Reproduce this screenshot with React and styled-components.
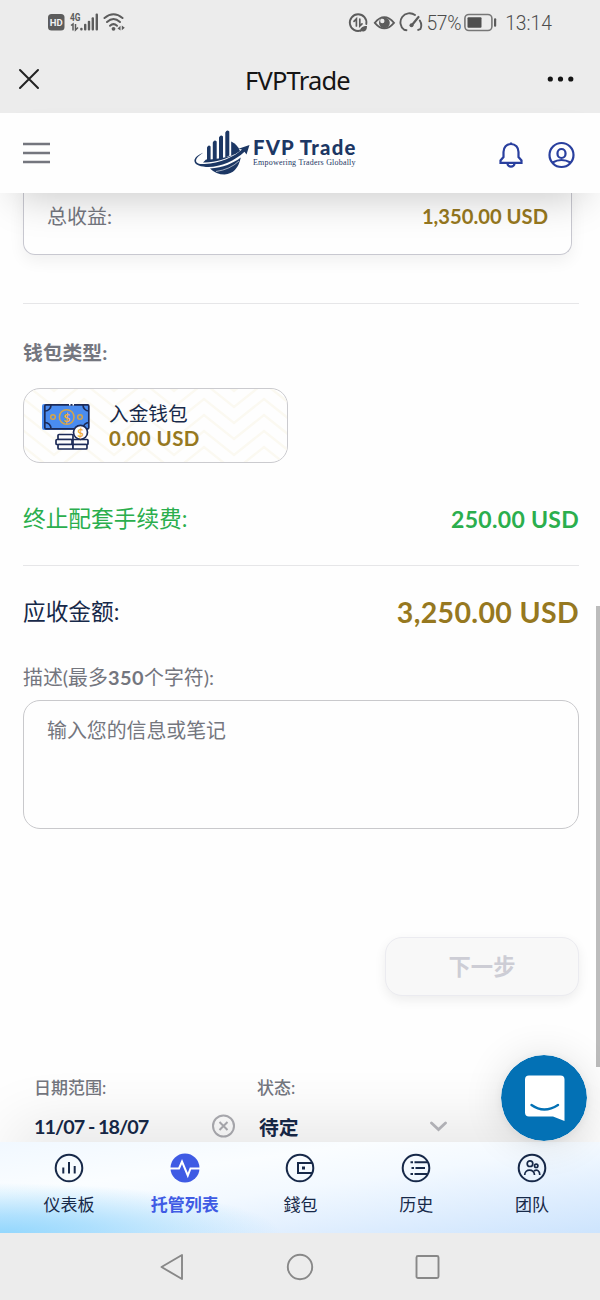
import styled, { createGlobalStyle } from "styled-components";

const GlobalStyle = createGlobalStyle`
  * {
    box-sizing: border-box;
  }
  body {
    margin: 0;
    background-color: #fefefe;
    font-family: Lato, "Noto Sans CJK SC", sans-serif;
  }
`;

const Container = styled.div`
  position: relative;
  width: 600px;
  height: 1300px;
  display: flex;
  flex-direction: column;
  overflow: hidden;
`;
const StatusBar = styled.div`
  height: 46px;
  padding: 0 48px 0 47px;
  display: flex;
  align-items: center;
  justify-content: space-between;
  background-color: #ececec;
`;
const StatusGroup = styled.div`
  display: flex;
  align-items: center;
`;
const StatusText = styled.span`
  font-family: Roboto, sans-serif;
  font-size: 19.3px;
  font-weight: 300;
  line-height: 44px;
  padding-top: 2px;
  color: #4c4c4c;
  letter-spacing: ${(props) => props.$spacing || "0"};
  margin: ${(props) => props.$margin || "0"};
`;
const TitleBar = styled.div`
  height: 67px;
  padding: 0 25px 1px 18px;
  display: grid;
  grid-template-columns: 60px 1fr 60px;
  align-items: center;
  background-color: #ececec;
`;
const Title = styled.h1`
  margin: 1px 0 0 2px;
  font-family: "Noto Sans", sans-serif;
  font-size: 25.5px;
  font-weight: 400;
  letter-spacing: -0.8px;
  color: #151515;
  text-align: center;
`;
const More = styled.svg`
  justify-self: end;
`;
const Header = styled.header`
  position: relative;
  z-index: 2;
  height: 80px;
  flex: none;
  padding: 0 24px 0 22px;
  display: grid;
  grid-template-columns: 172px 1fr auto;
  align-items: center;
  background-color: #fefefe;
  box-shadow: 0 20px 40px -16px rgba(0, 0, 0, 0.22);
`;
const Logo = styled.div`
  display: flex;
  align-items: center;
`;
const LogoText = styled.div`
  display: flex;
  flex-direction: column;
  margin: 0 0 2px 3px;
  color: #1c3764;
`;
const LogoName = styled.span`
  font-size: 20.3px;
  font-weight: 900;
  line-height: 21px;
  letter-spacing: 1.2px;
  white-space: nowrap;
`;
const LogoTagline = styled.span`
  font-family: "Liberation Serif", serif;
  font-size: 8px;
  line-height: 9px;
  letter-spacing: 0.2px;
  white-space: nowrap;
`;
const HeaderIcons = styled.div`
  display: flex;
  align-items: center;
  gap: 24px;
  margin-top: 3px;
`;
const Content = styled.main`
  height: 949px;
  flex: none;
  padding: 0 21px 0 23px;
  overflow: hidden;
  background-color: #fefefe;
`;
const ProfitCard = styled.div`
  width: 549px;
  height: 62px;
  padding: 0 23px;
  display: flex;
  align-items: flex-start;
  justify-content: space-between;
  border: 1px solid #c8c8d0;
  border-top: 0;
  border-radius: 0 0 12px 12px;
  box-shadow: 0 6px 16px rgba(0, 0, 0, 0.06);
`;
const Label = styled.span`
  font-size: ${(props) => props.$size || 20}px;
  font-weight: ${(props) => props.$weight || 400};
  line-height: ${(props) => props.$line || 46}px;
  color: ${(props) => props.$color || "#74767e"};
`;
const Digits = styled.span`
  font-weight: 700;
  letter-spacing: 0.5px;
`;
const Amount = styled.span`
  font-size: ${(props) => props.$size || 20}px;
  font-weight: 700;
  line-height: ${(props) => props.$line || 46}px;
  letter-spacing: ${(props) => props.$spacing || "0"};
  color: ${(props) => props.$color || "#967820"};
`;
const Divider = styled.hr`
  height: 1px;
  margin: ${(props) => props.$margin};
  border: 0;
  background-color: #e6e6e8;
`;
const Row = styled.div`
  height: ${(props) => props.$height}px;
  padding: ${(props) => props.$padding || "0"};
  display: flex;
  align-items: center;
  justify-content: space-between;
`;
const WalletCard = styled.div`
  position: relative;
  width: 265px;
  height: 75px;
  margin-top: 18px;
  padding-left: 18px;
  display: flex;
  align-items: center;
  gap: 18px;
  overflow: hidden;
  border: 1px solid #cbcbcf;
  border-radius: 17px;
`;
const WalletPattern = styled.svg`
  position: absolute;
  inset: 0;
`;
const WalletIcon = styled.svg`
  position: relative;
`;
const WalletInfo = styled.div`
  position: relative;
  display: flex;
  flex-direction: column;
`;
const TextArea = styled.textarea`
  display: block;
  width: 556px;
  height: 129px;
  padding: 15px 23px;
  border: 1px solid #c9c9cc;
  border-radius: 17px;
  background-color: #fefefe;
  font-family: Lato, "Noto Sans CJK SC", sans-serif;
  font-size: 19.9px;
  line-height: 28px;
  resize: none;

  &::placeholder {
    color: #74767e;
  }
`;
const Actions = styled.div`
  display: flex;
  justify-content: flex-end;
  margin-top: 108px;
`;
const NextButton = styled.button`
  width: 194px;
  height: 59px;
  padding: 0 0 3px;
  border: 1px solid #ebebf0;
  border-radius: 17px;
  background-color: #f8f8f8;
  box-shadow: 0 4px 12px rgba(0, 0, 0, 0.07);
  font-family: "Noto Sans CJK SC", sans-serif;
  font-size: 22.3px;
  font-weight: 700;
  color: #cdcdd5;
`;
const Filters = styled.div`
  display: grid;
  grid-template-columns: 223px 190px;
  margin: 77px 0 0 11px;
`;
const Filter = styled.div`
  display: flex;
  flex-direction: column;
`;
const FilterValue = styled.div`
  height: 46px;
  padding: ${(props) => props.$padding || "0"};
  display: flex;
  align-items: center;
  justify-content: space-between;
  font-size: 19.8px;
  font-weight: 700;
  letter-spacing: ${(props) => props.$spacing || "0"};
  color: #172949;
`;
const BottomNav = styled.nav`
  position: relative;
  z-index: 1;
  height: 91px;
  flex: none;
  padding: 0 10px 0 11px;
  display: grid;
  grid-template-columns: repeat(5, 1fr);
  background:
    radial-gradient(ellipse 280px 50px at 0 100%, #93d7fd 0%, rgba(158, 218, 253, 0.8) 35%, rgba(200, 230, 254, 0) 100%),
    linear-gradient(172deg, #f1f8ff 0%, #fafdff 30%, #f3f9ff 50%, #dcecfe 80%, #cde4fd 100%);
  box-shadow: 0 -28px 64px -14px rgba(0, 0, 0, 0.11);
`;
const NavItem = styled.a`
  display: flex;
  flex-direction: column;
  align-items: center;
  padding-top: 11px;
  font-size: 17px;
  line-height: 26px;
  font-weight: ${(props) => (props.$active ? 700 : 400)};
  color: ${(props) => (props.$active ? "#3f5be4" : "#172949")};

  svg {
    margin-bottom: 9px;
  }
`;
const SystemNav = styled.div`
  height: 67px;
  flex: none;
  position: relative;
  z-index: 2;
  padding-left: 159px;
  display: flex;
  align-items: center;
  gap: 101px;
  background-color: #ececec;
`;
const ChatButton = styled.svg`
  position: absolute;
  z-index: 3;
  left: 501px;
  top: 1055px;
  border-radius: 50%;
  box-shadow: 0 2px 40px rgba(0, 0, 0, 0.12), 0 1px 8px rgba(0, 0, 0, 0.06);
`;
const ScrollThumb = styled.div`
  position: absolute;
  z-index: 1;
  right: 0;
  top: 606px;
  width: 4px;
  height: 461px;
  background-color: #bcbcbc;
`;

const SignalIcons = () => (
  <svg width="80" height="24" viewBox="0 0 80 24" fill="#5c5c5c">
    <rect x="1" y="3" width="16.5" height="16.5" rx="3.5" />
    <text x="9.2" y="14.8" textAnchor="middle" fontFamily="Roboto" fontSize="9.5" fontWeight="700" fill="#f0f0f0">HD</text>
    <text x="23" y="9.5" fontFamily="Roboto" fontSize="10" fontWeight="700" textLength="10.5" lengthAdjust="spacingAndGlyphs">4G</text>
    <path d="M24 14.5l2-1.5V19.5M28.5 13V19l2.5-2.5" stroke="#5c5c5c" strokeWidth="1.5" fill="none" />
    <rect x="33.2" y="16.8" width="2.4" height="2.7" rx="1" />
    <rect x="37" y="12.8" width="2.4" height="6.7" rx="1" />
    <rect x="40.8" y="9.8" width="2.4" height="9.7" rx="1" />
    <rect x="44.6" y="6.3" width="2.4" height="13.2" rx="1" />
    <rect x="48.6" y="2.5" width="2.4" height="17" rx="1" />
    <g fill="none" stroke="#5c5c5c" strokeWidth="2" strokeLinecap="round">
      <path d="M57.5 7Q66.5-.5 75.5 7" />
      <path d="M60 11Q66.5 5 73 11" />
      <path d="M63 14.8Q66.5 11.5 70 14.8" />
    </g>
    <circle cx="66.5" cy="17.8" r="1.9" />
    <path d="M70.5 17.5l3-2.8v4.8M74.8 14.5v4.8l3-2.5z" />
  </svg>
);

const StateIcons = () => (
  <svg width="78" height="22" viewBox="0 0 78 22" fill="none" stroke="#5c5c5c" strokeWidth="1.9" strokeLinecap="round">
    <path d="M13 18.4A8.3 8.3 0 1 1 18.3 12" />
    <path d="M6 9.3L8.4 6.8V14M11.8 7.2V14L14 11.8" strokeWidth="1.7" />
    <path d="M12.5 20.3c-1-4 1.5-6.3 6.5-6.2c.2 4.6-2.5 6.5-5.3 4.9z" fill="#5c5c5c" stroke="none" />
    <path d="M26.800 10.800Q36.300-.5 46 10.800Q36.300 22 26.800 10.800z" strokeWidth="1.800" />
    <circle cx="36.400" cy="10.800" r="5.400" fill="#5c5c5c" stroke="none" />
    <circle cx="34.300" cy="9" r="2.200" fill="#ececec" stroke="none" />
    <path d="M58.500 18.200l-2.300-.4A9 9 0 0 1 67 3M71.800 8.500a9 9 0 0 1 .6 8.600l-2.200.8" />
    <path d="M64 13L70.500 5" strokeWidth="2.200" />
    <circle cx="63.500" cy="13.200" r="2" fill="#5c5c5c" stroke="none" />
  </svg>
);

const BatteryIcon = () => (
  <svg width="35" height="20" viewBox="0 0 35 20" fill="none">
    <rect x="1.900" y="1.500" width="27" height="16" rx="4" stroke="#777" strokeWidth="1.600" />
    <rect x="4.500" y="4.300" width="14" height="10.500" rx="1" fill="#4f4f4f" />
    <rect x="31" y="5.300" width="2.200" height="8.500" rx="1" fill="#5c5c5c" />
  </svg>
);

const LogoMark = () => (
  <svg width="56" height="50" viewBox="0 0 56 50" fill="#1c3764">
    <path d="M13 34V19.500q1.600-3.500 3.600-1V33zM18.800 32.500V14.500q1.600-3.500 3.900-1V31.500zM25 31.500V9.500q1.600-3.500 4-1V30zM31.300 29.500V4.500q1.700-3.500 4-1V27.500z" />
    <path d="M37.200 13.500q6.500 3 8.800 9.500q-3.600 3-8.800 4.500z" />
    <path d="M9.500 24.500C-2 32 1 36.500 10.500 36C26 35.500 40.500 28.500 48 21.500L44.500 20.800L55.500 17L52.500 26.500L50.500 23.800C40.500 33 25.500 39.800 12 39C-3 38-3 29.500 9.500 24.500z" />
    <path d="M9 34.500C20 35 33 31 41 26C33 30 20 31.500 12 31.500z" />
    <path d="M16 40.500C29 39.500 39 35.500 46.800 29.500Q43.500 45.500 30.500 46.500Q22 46.500 16 40.500z" />
    <path d="M22 43.500Q36 41.500 45 33" stroke="#fefefe" strokeWidth=".6" fill="none" />
  </svg>
);

const ZigZag = () => {
  const rows = [-22, -6, 10, 26, 42, 58, 74];
  return (
    <WalletPattern width="263" height="73" viewBox="0 0 263 73" fill="none" stroke="#fbf9f1" strokeWidth="2.400">
      {rows.map((y) => (
        <path
          key={y}
          d={`M-30 ${y + 24}L0 ${y}l30 24l30-24l30 24l30-24l30 24l30-24l30 24l30-24l30 24`}
        />
      ))}
    </WalletPattern>
  );
};

const MoneyIcon = () => (
  <WalletIcon width="49" height="50" viewBox="0 0 49 50" fill="none" stroke="#1d2b58" strokeWidth="1.700">
    <rect x="0" y="3" width="47" height="26" rx="2" fill="#4a8cf0" stroke="none" />
    <rect x="2.800" y="3.800" width="44" height="24" rx="1.200" />
    <path d="M9 4a6 6 0 0 1-6 6M41 4a6 6 0 0 0 6 6M9 27.500a6 6 0 0 0-6-6M41 27.500a6 6 0 0 1 6-6" />
    <path d="M27 3.500h1.500M30.500 3.500h1.500" stroke="#fff" strokeWidth="2" />
    <g stroke="#d5a548" strokeWidth="1.500">
      <circle cx="24.700" cy="16" r="7.300" />
      <circle cx="11" cy="16" r="2.300" />
      <circle cx="38" cy="16" r="2.300" />
    </g>
    <text x="24.700" y="20.500" textAnchor="middle" fontFamily="Lato" fontSize="12" fontWeight="700" fill="#f2ae3d" stroke="none">$</text>
    <g fill="#fefefe">
      <rect x="16" y="33.500" width="15" height="5" rx="1" />
      <rect x="14" y="38.500" width="16" height="5" rx="1" />
      <rect x="16" y="43.500" width="15" height="4.500" rx="1" />
      <rect x="31" y="38.500" width="15" height="5" rx="1" />
      <rect x="31" y="43.500" width="14" height="4.500" rx="1" />
      <circle cx="38.500" cy="31.300" r="7" />
    </g>
    <text x="38.500" y="35.500" textAnchor="middle" fontFamily="Lato" fontSize="11" fontWeight="700" fill="#f2ae3d" stroke="none">$</text>
  </WalletIcon>
);

const icons = {
  dashboard: (
    <>
      <circle cx="15" cy="15" r="13.300" />
      <path d="M9.300 14.500V20.500M15 9V20.500M20.700 13V20.500" />
    </>
  ),
  escrow: (
    <>
      <circle cx="15" cy="15" r="14.500" fill="#3f5be4" stroke="none" />
      <path d="M0 15.500H9L12 8.500L17.800 22.500L20.500 15.500H30" stroke="#fff" />
    </>
  ),
  wallet: (
    <>
      <circle cx="15" cy="15" r="13.300" />
      <path d="M27 10H13V20H27" />
      <rect x="17" y="13.500" width="3" height="3" fill="#172949" stroke="none" />
    </>
  ),
  history: (
    <>
      <circle cx="15" cy="15" r="13.300" />
      <path d="M13.500 9.300H26.500M14.500 15H24M13.500 21H26.500M9.500 9.300h2.500M10.500 15h2.500M9.500 21h2.500" />
    </>
  ),
  team: (
    <>
      <circle cx="15" cy="15" r="13.300" />
      <g strokeWidth="1.700">
        <circle cx="13" cy="10.700" r="2.800" />
        <circle cx="19.200" cy="12.800" r="1.700" />
        <path d="M7.700 22c0-6.500 9.800-6.500 9.800 0M17 18c3-2 5.800-.3 5.800 4" />
      </g>
    </>
  ),
};

const navItems = [
  { icon: "dashboard", label: "仪表板" },
  { icon: "escrow", label: "托管列表", active: true },
  { icon: "wallet", label: "錢包" },
  { icon: "history", label: "历史" },
  { icon: "team", label: "团队" },
];

const App = () => {
  return (
    <Container>
      <GlobalStyle />
      <StatusBar>
        <StatusGroup>
          <SignalIcons />
        </StatusGroup>
        <StatusGroup>
          <StateIcons />
          <StatusText $spacing="-0.3px" $margin="0 2px 0 0">57%</StatusText>
          <BatteryIcon />
          <StatusText $margin="0 0 0 7px">13:14</StatusText>
        </StatusGroup>
      </StatusBar>
      <TitleBar>
        <svg width="22" height="22" viewBox="0 0 22 22" stroke="#222" strokeWidth="2" strokeLinecap="round">
          <path d="M2 2L20 20M20 2L2 20" />
        </svg>
        <Title>FVPTrade</Title>
        <More width="28" height="6" viewBox="0 0 28 6" fill="#151515">
          <circle cx="3.300" cy="3" r="2.600" />
          <circle cx="13.500" cy="3" r="2.600" />
          <circle cx="23.800" cy="3" r="2.600" />
        </More>
      </TitleBar>
      <Header>
        <svg width="29" height="22" viewBox="0 0 29 22" stroke="#74767e" strokeWidth="2.400">
          <path d="M1 2H28M1 11H28M1 20H28" />
        </svg>
        <Logo>
          <LogoMark />
          <LogoText>
            <LogoName>FVP Trade</LogoName>
            <LogoTagline>Empowering Traders Globally</LogoTagline>
          </LogoText>
        </Logo>
        <HeaderIcons>
          <svg width="26" height="28" viewBox="0 0 26 28" fill="none" stroke="#293f9e" strokeWidth="2.200">
            <path d="M2.500 21.800V19.500L5.500 16V11C5.500 6.500 8.500 3 13 3S20.500 6.500 20.500 11V16L23.500 19.500V21.800z" />
            <path d="M13 1.500V4M9.500 22.500a3.500 3.200 0 0 0 7 0" />
          </svg>
          <svg width="28" height="28" viewBox="0 0 28 28" fill="none" stroke="#293f9e" strokeWidth="2.200">
            <circle cx="13.500" cy="14" r="12" />
            <rect x="9.500" y="8" width="8" height="9" rx="4" />
            <path d="M4.500 21.500Q13.500 16.500 22.500 21.500" />
          </svg>
        </HeaderIcons>
      </Header>
      <Content>
        <ProfitCard>
          <Label>总收益:</Label>
          <Amount $size={20.2}>1,350.00 USD</Amount>
        </ProfitCard>
        <Divider $margin="48px 0 33px" />
        <Row $height={33} $padding="0 0 2px">
          <Label $weight={700} $line={31} $size={19.8}>钱包类型:</Label>
        </Row>
        <WalletCard>
          <ZigZag />
          <MoneyIcon />
          <WalletInfo>
            <Label $size={19.7} $line={25} $color="#172949">入金钱包</Label>
            <Amount $size={20.5} $line={25} $spacing="0.4px">0.00 USD</Amount>
          </WalletInfo>
        </WalletCard>
        <Row $height={102} $padding="9px 0 0">
          <Label $size={22.7} $color="#2bae4d">终止配套手续费:</Label>
          <Amount $size={23} $spacing="0.3px" $color="#2bae4d">250.00 USD</Amount>
        </Row>
        <Divider $margin="0" />
        <Row $height={92}>
          <Label $size={22.7} $color="#172949">应收金额:</Label>
          <Amount $size={28.5} $spacing="0.35px">3,250.00 USD</Amount>
        </Row>
        <Row $height={42} $padding="0 0 4px">
          <Label $line={38} $size={19.9}>描述(最多<Digits>350</Digits>个字符):</Label>
        </Row>
        <TextArea placeholder="输入您的信息或笔记" />
        <Actions>
          <NextButton disabled>下一步</NextButton>
        </Actions>
        <Filters>
          <Filter>
            <Label $size={17} $weight={500} $line={30}>日期范围:</Label>
            <FilterValue $spacing="-1px">
              11/07 - 18/07
              <svg width="68" height="24" viewBox="0 0 68 24" fill="none" stroke="#adadb2" strokeWidth="2">
                <circle cx="34.500" cy="12" r="10.500" />
                <path d="M30.500 8L38.500 16M38.500 8L30.500 16" />
              </svg>
            </FilterValue>
          </Filter>
          <Filter>
            <Label $size={17} $weight={500} $line={30}>状态:</Label>
            <FilterValue $padding="0 0 0 2px">
              待定
              <svg width="18" height="12" viewBox="0 0 18 12" fill="none" stroke="#b9b9be" strokeWidth="2.800" strokeLinecap="round">
                <path d="M2.500 3L9.500 9.500L16.500 3" />
              </svg>
            </FilterValue>
          </Filter>
        </Filters>
      </Content>
      <BottomNav>
        {navItems.map((item) => (
          <NavItem key={item.icon} $active={item.active}>
            <svg width="30" height="30" viewBox="0 0 30 30" fill="none" stroke="#172949" strokeWidth="2">
              {icons[item.icon]}
            </svg>
            {item.label}
          </NavItem>
        ))}
      </BottomNav>
      <SystemNav>
        <svg width="26" height="28" viewBox="0 0 26 28" fill="none" stroke="#888" strokeWidth="1.900" strokeLinejoin="round">
          <path d="M23 2V26L2.500 14z" />
        </svg>
        <svg width="28" height="28" viewBox="0 0 28 28" fill="none" stroke="#888" strokeWidth="1.900">
          <circle cx="14" cy="14" r="12.200" />
        </svg>
        <svg width="26" height="28" viewBox="0 0 26 28" fill="none" stroke="#888" strokeWidth="1.900">
          <rect x="1.500" y="3" width="22" height="22" rx="1.500" />
        </svg>
      </SystemNav>
      <ScrollThumb />
      <ChatButton width="86" height="86" viewBox="0 0 86 86">
        <circle cx="43" cy="43" r="43" fill="#0371b5" />
        <path d="M28 20.500H59.500a4 4 0 0 1 4 4V66L52 61.500H28a4 4 0 0 1-4-4V24.500a4 4 0 0 1 4-4z" fill="#fff" />
        <path d="M30.500 50Q43 59 57 50" fill="none" stroke="#0371b5" strokeWidth="2.400" strokeLinecap="round" />
      </ChatButton>
    </Container>
  );
};

export default App;
